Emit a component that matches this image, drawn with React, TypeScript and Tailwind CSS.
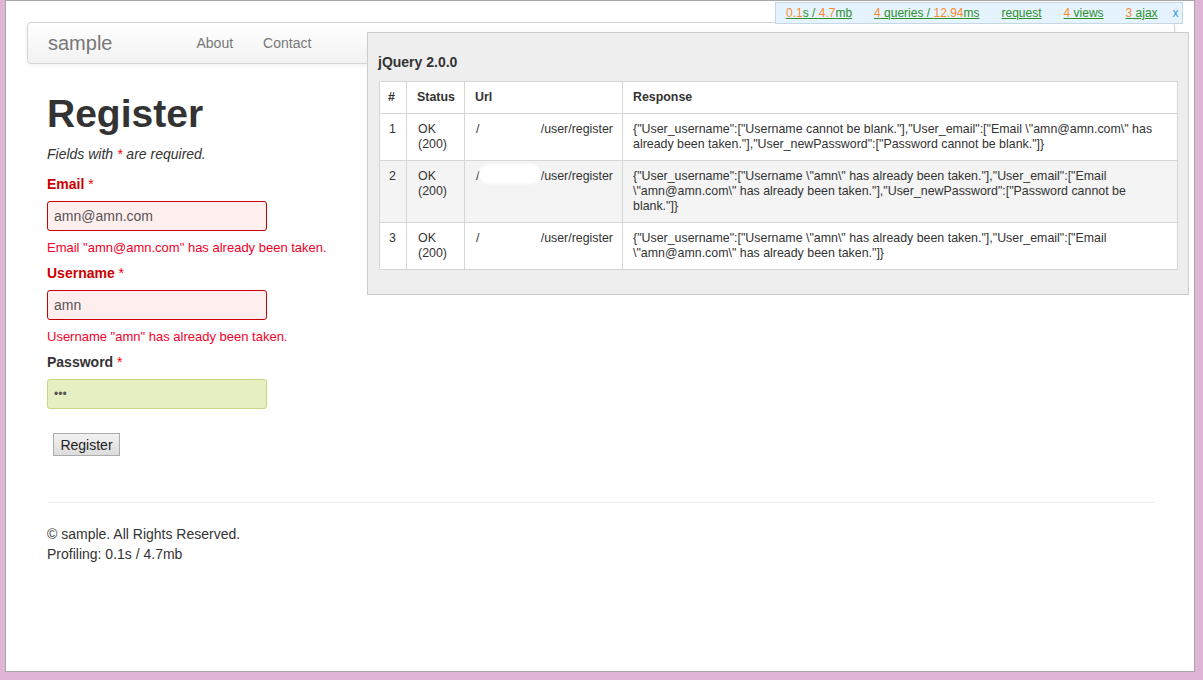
import React from "react"

const rows = [
  {
    n: 1,
    response:
      '{"User_username":["Username cannot be blank."],"User_email":["Email \\"amn@amn.com\\" has already been taken."],"User_newPassword":["Password cannot be blank."]}',
  },
  {
    n: 2,
    response:
      '{"User_username":["Username \\"amn\\" has already been taken."],"User_email":["Email \\"amn@amn.com\\" has already been taken."],"User_newPassword":["Password cannot be blank."]}',
  },
  {
    n: 3,
    response:
      '{"User_username":["Username \\"amn\\" has already been taken."],"User_email":["Email \\"amn@amn.com\\" has already been taken."]}',
  },
]

function Num({ children }: { children: React.ReactNode }) {
  return <span className="text-[#f98b2c]">{children}</span>
}

export default function App() {
  return (
    <div className="h-[680px] w-[1203px] overflow-hidden bg-[#e0b4d4] pl-[5px] pr-[8px] pb-[8px] font-['Liberation_Sans',Arial,sans-serif] text-[14px] leading-[20px] text-[#333]">
      <div className="relative h-full border border-[#a6a6a6] bg-white">
        {/* Navbar */}
        <div className="mt-[21px] ml-[21px] mr-[19px] flex h-[42px] items-center rounded-[4px] border border-[#d4d4d4] bg-gradient-to-b from-white to-[#f2f2f2] shadow-[0_1px_4px_rgba(0,0,0,0.065)]">
          <span className="ml-[20px] text-[20px] text-[#777]">sample</span>
          <nav className="ml-[69px] flex text-[14px] text-[#777]">
            <span className="px-[15px]">About</span>
            <span className="px-[15px]">Contact</span>
          </nav>
        </div>

        {/* Main */}
        <div className="ml-[41px] w-[1108px]">
          <h1 className="mt-[30px] text-[39px] font-bold leading-[40px] text-[#333]">Register</h1>
          <p className="mt-[10px] italic">
            Fields with <span className="text-[#f00]">*</span> are required.
          </p>

          <label className="mt-[10px] block font-bold text-[#c00]">
            Email <span className="font-normal text-[#f00]">*</span>
          </label>
          <input
            readOnly
            value="amn@amn.com"
            className="mt-[7px] block h-[30px] w-[220px] rounded-[3px] border border-[#c00] bg-[#fee] px-[6px] text-[14px] text-[#555] outline-none"
          />
          <div className="mt-[7px] text-[13px] text-[#f3002a]">Email "amn@amn.com" has already been taken.</div>

          <label className="mt-[5px] block font-bold text-[#c00]">
            Username <span className="font-normal text-[#f00]">*</span>
          </label>
          <input
            readOnly
            value="amn"
            className="mt-[7px] block h-[30px] w-[220px] rounded-[3px] border border-[#c00] bg-[#fee] px-[6px] text-[14px] text-[#555] outline-none"
          />
          <div className="mt-[7px] text-[13px] text-[#f3002a]">Username "amn" has already been taken.</div>

          <label className="mt-[5px] block font-bold text-[#333]">
            Password <span className="font-normal text-[#f00]">*</span>
          </label>
          <input
            readOnly
            type="password"
            value="abc"
            className="mt-[7px] block h-[30px] w-[220px] rounded-[3px] border border-[#c6d880] bg-[#e6efc2] px-[6px] text-[12px] text-[#555] outline-none"
          />

          <button className="mt-[24px] ml-[6px] block h-[23px] w-[67px] border border-[#acacac] bg-gradient-to-b from-[#f2f2f2] to-[#dcdcdc] text-[14px] leading-[20px] text-[#222]">
            Register
          </button>

          <hr className="mt-[46px] border-t border-[#eee]" />

          <div className="mt-[21px]">
            <div>© sample. All Rights Reserved.</div>
            <div>Profiling: 0.1s / 4.7mb</div>
          </div>
        </div>

        {/* Debug toolbar */}
        <div className="absolute left-[769px] top-[1px] flex h-[22px] w-[408px] items-center border border-[#c6d6e2] bg-[#e4f3fd] pl-[10px] text-[12px]">
          <div className="flex gap-[22px] text-[#2f8f2f] underline">
            <span>
              <Num>0.1</Num>s / <Num>4.7</Num>mb
            </span>
            <span>
              <Num>4</Num> queries / <Num>12.94</Num>ms
            </span>
            <span>request</span>
            <span>
              <Num>4</Num> views
            </span>
            <span>
              <Num>3</Num> ajax
            </span>
          </div>
          <span className="ml-[15px] text-[#3a9ad9]">x</span>
        </div>

        {/* AJAX panel */}
        <div className="absolute left-[361px] top-[31px] h-[263px] w-[822px] border border-[#ccc] bg-[#eee] pt-[19px] pl-[10px] pr-[10px]">
          <div className="text-[14px] font-bold leading-[20px] text-[#333]">jQuery 2.0.0</div>
          <table className="mt-[9px] ml-[1px] w-[799px] table-fixed border-collapse bg-white text-[12.4px] leading-[15px] text-[#333]">
            <colgroup>
              <col className="w-[27px]" />
              <col className="w-[58px]" />
              <col className="w-[158px]" />
              <col />
            </colgroup>
            <thead>
              <tr>
                <th className="border border-[#d6d6d6] px-[8px] py-[8px] text-left font-bold">#</th>
                <th className="border border-[#d6d6d6] px-[10px] py-[8px] text-left font-bold">Status</th>
                <th className="border border-[#d6d6d6] px-[10px] py-[8px] text-left font-bold">Url</th>
                <th className="border border-[#d6d6d6] px-[10px] py-[8px] text-left font-bold">Response</th>
              </tr>
            </thead>
            <tbody>
              {rows.map((r) => (
                <tr key={r.n} className={r.n === 2 ? "bg-[#f4f4f4]" : "bg-white"}>
                  <td className="border border-[#d6d6d6] px-[9px] py-[8px] align-top">{r.n}</td>
                  <td className="border border-[#d6d6d6] px-[11px] py-[8px] align-top">
                    OK
                    <br />
                    (200)
                  </td>
                  <td className="relative border border-[#d6d6d6] pl-[11px] pr-[9px] py-[8px] align-top">
                    <div className="flex justify-between">
                      <span>/</span>
                      <span>/user/register</span>
                    </div>
                    {r.n === 2 && (
                      <div className="absolute left-[14px] top-[3px] h-[20px] w-[62px] rounded-[10px] bg-white blur-[1px]" />
                    )}
                  </td>
                  <td className="border border-[#d6d6d6] px-[10px] py-[8px] align-top">{r.response}</td>
                </tr>
              ))}
            </tbody>
          </table>
        </div>
      </div>
    </div>
  )
}
